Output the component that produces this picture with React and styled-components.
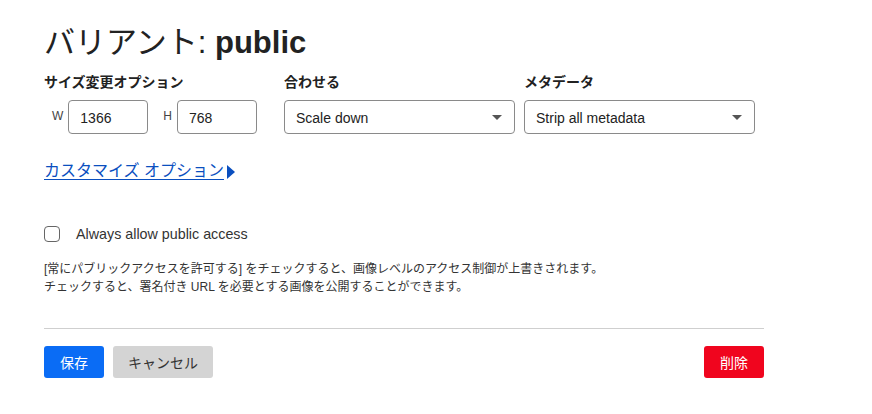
import React from "react";
import styled, { createGlobalStyle } from "styled-components";

const Global = createGlobalStyle`
  html, body { margin: 0; padding: 0; background: #fff; }
  body { font-family: "Liberation Sans", "Noto Sans CJK JP", sans-serif; color: #222; }
`;

const Page = styled.div`
  width: 720px;
  padding: 25px 44px 0;
`;

const Title = styled.h1`
  margin: 0;
  font-size: 31px;
  line-height: 36px;
  font-weight: 400;
  color: #222;
  letter-spacing: 0;
`;

const TitleStrong = styled.span`
  font-weight: 700;
`;

const Fields = styled.div`
  display: grid;
  grid-template-columns: repeat(3, 240px);
  margin-top: 11px;
`;

const Field = styled.div`
  display: flex;
  flex-direction: column;
  gap: 8px;
`;

const FieldLabel = styled.div`
  font-size: 14px;
  line-height: 20px;
  font-weight: 700;
  color: #222;
`;

const SizeRow = styled.div`
  display: flex;
  align-items: center;
  gap: 7px;
`;

const SizePair = styled.label`
  display: flex;
  align-items: center;
`;

const SizeTag = styled.span`
  font-size: 12px;
  color: #444;
  padding: 0 5px 0 8px;
  align-self: flex-start;
  margin-top: 9px;
`;

const TextInput = styled.input`
  box-sizing: border-box;
  width: 80px;
  height: 34px;
  border: 1px solid #8a8a8a;
  border-radius: 4px;
  padding: 1px 11px 0;
  font: 14px "Liberation Sans", sans-serif;
  color: #222;
  outline: none;
`;

const SelectBox = styled.div`
  box-sizing: border-box;
  width: 231px;
  height: 34px;
  border: 1px solid #8a8a8a;
  border-radius: 4px;
  display: flex;
  align-items: center;
  justify-content: space-between;
  padding: 1px 12px 0 11px;
  font-size: 14px;
  color: #222;
`;

const Caret = styled.span`
  width: 0;
  height: 0;
  border-left: 5px solid transparent;
  border-right: 5px solid transparent;
  border-top: 5px solid #555;
`;

const LinkRow = styled.div`
  margin-top: 25px;
  display: flex;
  align-items: center;
  gap: 3px;
  height: 24px;
`;

const Link = styled.a`
  font-size: 16px;
  line-height: 24px;
  color: #0a4fbf;
  text-decoration: underline;
  text-underline-offset: 3px;
  cursor: pointer;
`;

const Arrow = styled.span`
  width: 0;
  height: 0;
  border-top: 7px solid transparent;
  border-bottom: 7px solid transparent;
  border-left: 8px solid #0a4fbf;
  margin-top: 1px;
`;

const CheckRow = styled.label`
  margin-top: 41px;
  display: flex;
  align-items: center;
  gap: 16px;
  height: 20px;
`;

const Box = styled.span`
  box-sizing: border-box;
  width: 16px;
  height: 16px;
  border: 1px solid #666;
  border-radius: 4px;
  background: #fff;
`;

const CheckText = styled.span`
  font-size: 14.3px;
  color: #333;
`;

const Help = styled.p`
  margin: 16px 0 0;
  font-size: 12px;
  line-height: 18px;
  color: #333;
`;

const Rule = styled.hr`
  margin: 32px 0 0;
  border: 0;
  border-top: 1px solid #cfcfcf;
  height: 0;
`;

const Actions = styled.div`
  margin-top: 17px;
  display: flex;
  gap: 9px;
`;

const Button = styled.button`
  height: 32px;
  padding: 0 ${(p) => (p.$wide ? 15 : 16)}px;
  border: 0;
  border-radius: 3px;
  font: 14px "Liberation Sans", "Noto Sans CJK JP", sans-serif;
  background: ${(p) => p.$bg};
  color: ${(p) => p.$fg};
  margin-left: ${(p) => (p.$push ? "auto" : "0")};
  cursor: pointer;
`;

export default function App() {
  return (
    <>
      <Global />
      <Page>
        <Title>
          バリアント: <TitleStrong>public</TitleStrong>
        </Title>
        <Fields>
          <Field>
            <FieldLabel>サイズ変更オプション</FieldLabel>
            <SizeRow>
              <SizePair>
                <SizeTag>W</SizeTag>
                <TextInput defaultValue="1366" />
              </SizePair>
              <SizePair>
                <SizeTag>H</SizeTag>
                <TextInput defaultValue="768" />
              </SizePair>
            </SizeRow>
          </Field>
          <Field>
            <FieldLabel>合わせる</FieldLabel>
            <SelectBox>
              Scale down
              <Caret />
            </SelectBox>
          </Field>
          <Field>
            <FieldLabel>メタデータ</FieldLabel>
            <SelectBox>
              Strip all metadata
              <Caret />
            </SelectBox>
          </Field>
        </Fields>
        <LinkRow>
          <Link>カスタマイズ オプション</Link>
          <Arrow />
        </LinkRow>
        <CheckRow>
          <Box />
          <CheckText>Always allow public access</CheckText>
        </CheckRow>
        <Help>
          [常にパブリックアクセスを許可する] をチェックすると、画像レベルのアクセス制御が上書きされます。
          <br />
          チェックすると、署名付き URL を必要とする画像を公開することができます。
        </Help>
        <Rule />
        <Actions>
          <Button $bg="#0a6cf5" $fg="#fff">保存</Button>
          <Button $bg="#d4d4d4" $fg="#333" $wide>キャンセル</Button>
          <Button $bg="#f0051e" $fg="#fff" $push>削除</Button>
        </Actions>
      </Page>
    </>
  );
}
